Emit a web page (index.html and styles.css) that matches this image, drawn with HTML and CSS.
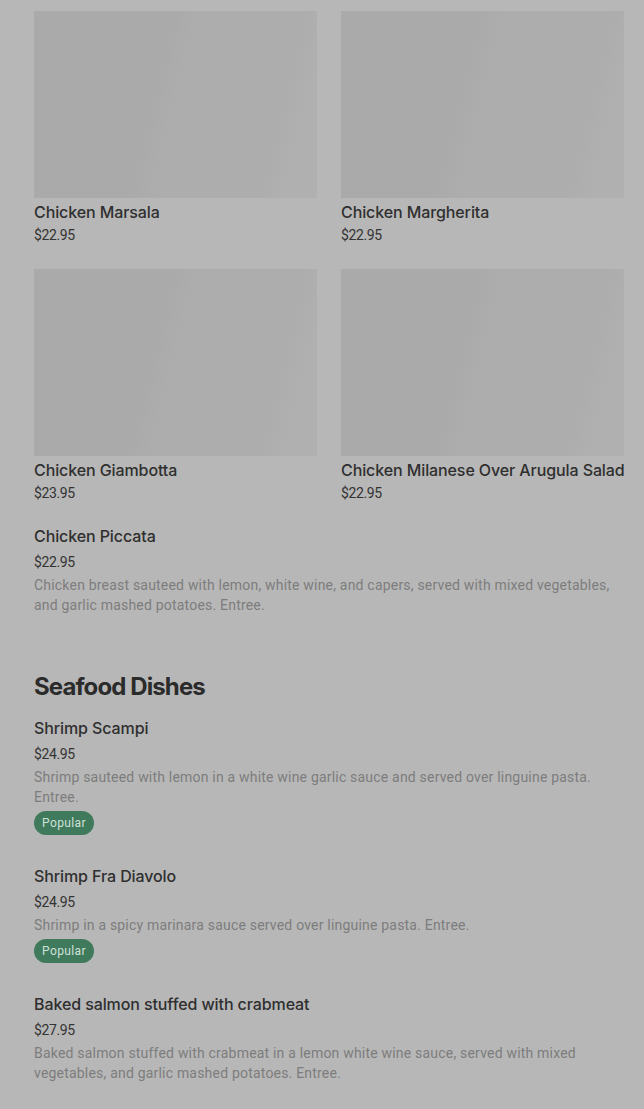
FILE: index.html
```html
<!DOCTYPE html>
<html lang="en">

<head>
    <meta charset="utf-8">
    <meta name="viewport" content="width=device-width, initial-scale=1.0">
    <title>Menu</title>
    <link rel="stylesheet" href="styles.css">
</head>

<body>

    <main class="menu">

        <div class="kort-liste">
            <div class="kort">
                <div class="billede"></div>
                <h3>Chicken Marsala</h3>
                <p class="pris">$22.95</p>
            </div>
            <div class="kort">
                <div class="billede"></div>
                <h3>Chicken Margherita</h3>
                <p class="pris">$22.95</p>
            </div>
            <div class="kort">
                <div class="billede"></div>
                <h3>Chicken Giambotta</h3>
                <p class="pris">$23.95</p>
            </div>
            <div class="kort">
                <div class="billede"></div>
                <h3>Chicken Milanese Over Arugula Salad</h3>
                <p class="pris">$22.95</p>
            </div>
        </div>

        <div class="ret">
            <h3>Chicken Piccata</h3>
            <p class="pris">$22.95</p>
            <p class="beskrivelse">Chicken breast sauteed with lemon, white wine, and capers, served with mixed vegetables, and garlic mashed potatoes. Entree.</p>
        </div>

        <h2 class="kategori">Seafood Dishes</h2>

        <div class="ret">
            <h3>Shrimp Scampi</h3>
            <p class="pris">$24.95</p>
            <p class="beskrivelse">Shrimp sauteed with lemon in a white wine garlic sauce and served over linguine pasta. Entree.</p>
            <span class="popular">Popular</span>
        </div>

        <div class="ret">
            <h3>Shrimp Fra Diavolo</h3>
            <p class="pris">$24.95</p>
            <p class="beskrivelse">Shrimp in a spicy marinara sauce served over linguine pasta. Entree.</p>
            <span class="popular">Popular</span>
        </div>

        <div class="ret">
            <h3>Baked salmon stuffed with crabmeat</h3>
            <p class="pris">$27.95</p>
            <p class="beskrivelse">Baked salmon stuffed with crabmeat in a lemon white wine sauce, served with mixed vegetables, and garlic mashed potatoes. Entree.</p>
        </div>

    </main>

</body>

</html>
```

FILE: styles.css
```css
* {
    box-sizing: border-box;
    padding: 0;
    margin: 0;
}

body {
    background: #b7b7b7;
    font-family: Inter, "Liberation Sans", sans-serif;
    color: #2f2f2f;
}

.menu {
    padding: 11px 20px 0 34px;
}

.kort-liste {
    display: grid;
    grid-template-columns: repeat(2, minmax(0, 1fr));
    column-gap: 24px;
    row-gap: 24px;
}

.billede {
    height: 187px;
    background: linear-gradient(104deg, #aaaaaa 0%, #aaaaaa 42%, #adadad 50%, #adadad 82%, #b0b0b0 90%, #b0b0b0 100%);
}

h3 {
    font-size: 16px;
    font-weight: 500;
    line-height: 24px;
    color: #2f2f2f;
    white-space: nowrap;
    letter-spacing: -0.1px;
}

.kort h3 {
    margin-top: 2px;
}

.pris {
    margin-top: 1px;
    font-family: Roboto, "Liberation Sans", sans-serif;
    font-size: 14px;
    line-height: 20px;
    color: #333;
    letter-spacing: -0.4px;
}

.ret {
    padding-top: 21px;
}

.ret + .ret {
    padding-top: 29px;
}

.ret .pris {
    margin-top: 2px;
    line-height: 24px;
}

.beskrivelse {
    margin-top: 1px;
    font-family: Roboto, "Liberation Sans", sans-serif;
    font-size: 14px;
    line-height: 20px;
    letter-spacing: 0.2px;
    color: #7d7d7d;
    padding-right: 8px;
}

.popular {
    display: inline-block;
    margin-top: 4px;
    height: 24px;
    padding: 0 8px;
    border-radius: 12px;
    background: #3f7a5d;
    color: #cfe0d7;
    font-family: Roboto, "Liberation Sans", sans-serif;
    font-size: 12px;
    line-height: 24px;
    letter-spacing: 0.4px;
}

.kategori {
    margin-top: 56px;
    font-size: 24px;
    font-weight: 700;
    line-height: 32px;
    letter-spacing: -0.9px;
    color: #2b2b2b;
}

.kategori + .ret {
    padding-top: 13px;
}
```
